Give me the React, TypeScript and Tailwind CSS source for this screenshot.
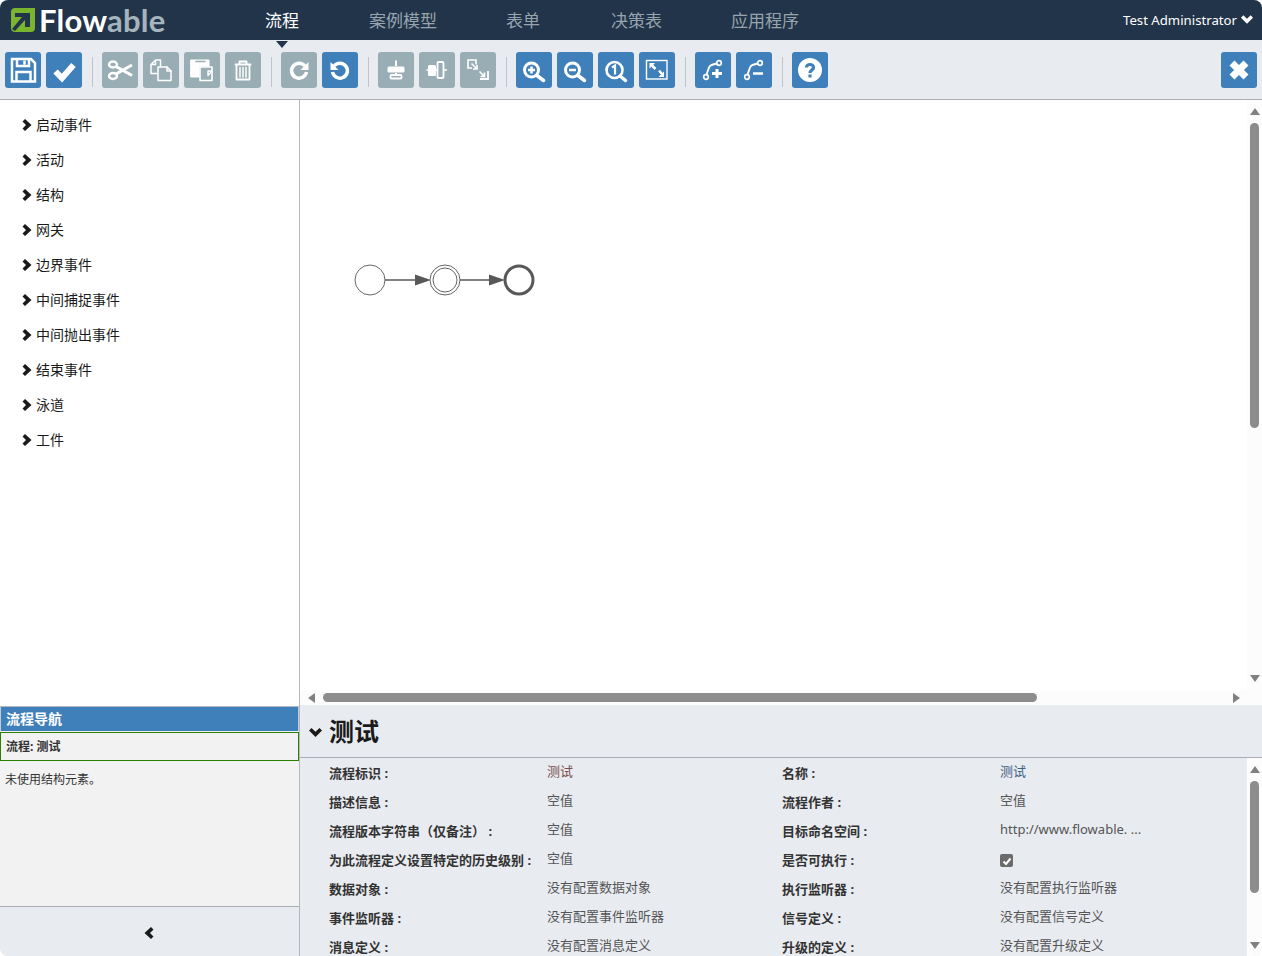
import type { ReactNode } from "react";

const FONT = "font-['Noto_Sans','Noto_Sans_CJK_SC',sans-serif]";

const NAV = [
  { label: "流程", gap: "pr-[70px] text-white" },
  { label: "案例模型", gap: "pr-[69px]" },
  { label: "表单", gap: "pr-[71px]" },
  { label: "决策表", gap: "pr-[69px]" },
  { label: "应用程序", gap: "" },
];
const PALETTE = ["启动事件", "活动", "结构", "网关", "边界事件", "中间捕捉事件", "中间抛出事件", "结束事件", "泳道", "工件"];

const ROWS: [string, string, string, string][] = [
  ["流程标识 :", "测试", "名称 :", "测试"],
  ["描述信息 :", "空值", "流程作者 :", "空值"],
  ["流程版本字符串（仅备注） :", "空值", "目标命名空间 :", "http://www.flowable. ..."],
  ["为此流程定义设置特定的历史级别 :", "空值", "是否可执行 :", "__check"],
  ["数据对象 :", "没有配置数据对象", "执行监听器 :", "没有配置执行监听器"],
  ["事件监听器 :", "没有配置事件监听器", "信号定义 :", "没有配置信号定义"],
  ["消息定义 :", "没有配置消息定义", "升级的定义 :", "没有配置升级定义"],
];

function Ico({ children }: { children: ReactNode }) {
  return (
    <svg viewBox="0 0 36 36" className="h-9 w-9" fill="none" stroke="white" strokeWidth="2" strokeLinecap="round" strokeLinejoin="round">
      {children}
    </svg>
  );
}

const ICONS: Record<string, ReactNode> = {
  save: (
    <Ico>
      <path d="M7 7H26L30 11V29.500H7Z" strokeWidth="2.500" strokeLinejoin="miter" />
      <path d="M12 7V14H24V7M19.500 8.500V12.500M11.500 29V20H25.500V29" strokeWidth="2.500" strokeLinejoin="miter" strokeLinecap="butt" />
    </Ico>
  ),
  check: (
    <Ico>
      <path d="M9.500 19.500L16 26L27.500 13" strokeWidth="6" strokeLinecap="butt" strokeLinejoin="miter" />
    </Ico>
  ),
  cut: (
    <Ico>
      <ellipse cx="11" cy="12.500" rx="4" ry="3" strokeWidth="2.400" />
      <ellipse cx="11" cy="24" rx="4" ry="3" strokeWidth="2.400" />
      <path d="M14 14.500L30 23.500M14 22L30 13" strokeWidth="3" strokeLinecap="butt" />
    </Ico>
  ),
  copy: (
    <Ico>
      <path d="M8 12.500L12.500 8H17.500V14M8 12.500H12.500V8M8 12.500V21.500H14" strokeWidth="1.500" />
      <path d="M15 15H24L28 19V28.500H15Z" strokeWidth="1.500" />
      <path d="M24 15V19H28" strokeWidth="1.500" />
    </Ico>
  ),
  paste: (
    <Ico>
      <path d="M7 8H25V14H15V25H7Z" fill="white" stroke="white" strokeWidth="1" />
      <path d="M12 9.500H21" stroke="#99aeb4" strokeWidth="1.500" />
      <path d="M16 15H28V28.500H16Z" strokeWidth="1.600" />
      <path d="M28 19L24 23.500V19Z" strokeWidth="1.400" />
    </Ico>
  ),
  trash: (
    <Ico>
      <path d="M10.500 12.500H25.500M14.500 12V9.500H21.500V12" strokeWidth="1.800" />
      <path d="M11.500 13V27.500H24.500V13" strokeWidth="1.800" />
      <path d="M15 15.500V25M18 15.500V25M21 15.500V25" strokeWidth="1.500" />
    </Ico>
  ),
  redo: (
    <Ico>
      <path d="M24 14A7.500 7.500 0 1 0 25.500 20" strokeWidth="3.500" strokeLinecap="butt" />
      <path d="M27.500 10V18H19.500Z" fill="white" stroke="none" />
    </Ico>
  ),
  undo: (
    <Ico>
      <path d="M12 14A7.500 7.500 0 1 1 10.500 20" strokeWidth="3.500" strokeLinecap="butt" />
      <path d="M8.500 10V18H16.500Z" fill="white" stroke="none" />
    </Ico>
  ),
  alignH: (
    <Ico>
      <path d="M18 8.500V14M18 21V23" strokeWidth="2" strokeLinecap="butt" />
      <rect x="9.500" y="14.500" width="17" height="6" rx="1.500" fill="white" stroke="none" />
      <rect x="12.500" y="23" width="11" height="3.500" rx="1" strokeWidth="1.800" />
    </Ico>
  ),
  alignV: (
    <Ico>
      <path d="M7.500 18H28" strokeWidth="1.500" strokeLinecap="butt" />
      <rect x="9" y="13" width="8" height="11" rx="1.500" fill="white" stroke="none" />
      <rect x="18.500" y="10" width="6" height="16" rx="1" fill="#99aeb4" stroke="white" strokeWidth="1.800" />
    </Ico>
  ),
  sameSize: (
    <Ico>
      <path d="M16 12.500V8H8V16H12" strokeWidth="1.600" strokeLinecap="butt" strokeLinejoin="miter" />
      <path d="M11.500 11.500L17 17M17 13V17H13" strokeWidth="1.600" strokeLinecap="butt" strokeLinejoin="miter" />
      <path d="M19.500 19.500L24.500 24.500M24.500 20.500V24.500H20.500" strokeWidth="1.600" strokeLinecap="butt" strokeLinejoin="miter" />
      <path d="M28 19V27H20" strokeWidth="1.800" strokeLinecap="butt" strokeLinejoin="miter" />
    </Ico>
  ),
  zoomIn: (
    <Ico>
      <circle cx="15.500" cy="18" r="7" strokeWidth="3" />
      <path d="M21 23.500L27.500 28.500" strokeWidth="3.500" />
      <path d="M12 18H19M15.500 14.500V21.500" strokeWidth="2.500" strokeLinecap="butt" />
    </Ico>
  ),
  zoomOut: (
    <Ico>
      <circle cx="15.500" cy="18" r="7" strokeWidth="3" />
      <path d="M21 23.500L27.500 28.500" strokeWidth="3.500" />
      <path d="M12 18H19" strokeWidth="2.500" strokeLinecap="butt" />
    </Ico>
  ),
  zoomOne: (
    <Ico>
      <circle cx="16.500" cy="18" r="8" strokeWidth="2.600" />
      <path d="M22 24L27.500 28.500" strokeWidth="3.500" />
      <path d="M14 15.500L17 13.500V22.500" strokeWidth="2.200" strokeLinecap="butt" strokeLinejoin="miter" />
    </Ico>
  ),
  fit: (
    <Ico>
      <rect x="7.500" y="8.500" width="20.500" height="18.500" strokeWidth="1.400" strokeLinejoin="miter" />
      <path d="M13 13.500L16.500 17M20 18.500L23 22" strokeWidth="2.500" strokeLinecap="butt" />
      <path d="M10.500 11H16L10.500 16.500Z M25 25H19.500L25 19.500Z" fill="white" stroke="none" />
    </Ico>
  ),
  bendAdd: (
    <Ico>
      <circle cx="11" cy="25" r="2.300" strokeWidth="1.700" />
      <circle cx="24" cy="11" r="2.300" strokeWidth="1.700" />
      <path d="M11.500 22.500L14 15.500C14.500 14 15 13.500 16.500 13L21.500 11.500" strokeWidth="1.900" />
      <path d="M17 21.500H27M22 17V26" strokeWidth="3" strokeLinecap="butt" />
    </Ico>
  ),
  bendRemove: (
    <Ico>
      <circle cx="11" cy="25" r="2.300" strokeWidth="1.700" />
      <circle cx="24" cy="11" r="2.300" strokeWidth="1.700" />
      <path d="M11.500 22.500L14 15.500C14.500 14 15 13.500 16.500 13L21.500 11.500" strokeWidth="1.900" />
      <path d="M17 21.500H27" strokeWidth="2.500" strokeLinecap="butt" />
    </Ico>
  ),
  help: (
    <Ico>
      <circle cx="18" cy="18" r="12" fill="white" stroke="none" />
      <path d="M14.500 15.500C14.500 11.500 21.500 11.500 21.500 15.500C21.500 18 18 18 18 21" stroke="#3f80bb" strokeWidth="3.200" strokeLinecap="butt" />
      <path d="M18 22.500V25.500" stroke="#3f80bb" strokeWidth="3.200" strokeLinecap="butt" />
    </Ico>
  ),
  close: (
    <Ico>
      <path d="M11 11L25 25M25 11L11 25" strokeWidth="7" strokeLinecap="butt" />
    </Ico>
  ),
};

function ToolButton({ icon, off }: { icon: string; off?: boolean }) {
  return (
    <div className={`h-9 w-9 rounded-[3px] ${off ? "bg-[#99aeb4]" : "bg-[#3f80bb]"}`}>{ICONS[icon]}</div>
  );
}

function Sep() {
  return <div className="mt-[5px] mr-[9px] ml-[10px] h-[30px] w-px self-start bg-[#bfc4ca]" />;
}

function Group({ children }: { children: ReactNode }) {
  return <div className="flex gap-[5px]">{children}</div>;
}

// chunky glyphicon style chevron, rotate for the other directions
function Chevron({ className }: { className: string }) {
  return (
    <svg viewBox="0 0 10 12" className={className}>
      <path d="M3 0L9.500 6L3 12L0.500 9.500L4 6L0.500 2.500Z" fill="#1a1a1a" />
    </svg>
  );
}

function ChevronBelow({ className, color }: { className: string; color: string }) {
  return (
    <svg viewBox="0 0 13 9" className={className}>
      <path d="M0 2.500L2.500 0L6.500 3.800L10.500 0L13 2.500L6.500 9Z" fill={color} />
    </svg>
  );
}

function Logo() {
  return (
    <div className="flex items-center">
      <svg viewBox="0 0 26 26" className="mr-[3px] h-[26px] w-[26px]">
        <path d="M5 1H25V21C25 23.500 23.500 25 21 25H5C2.500 25 1 23.500 1 21V5C1 2.500 2.500 1 5 1Z" fill="#7ab530" />
        <path d="M5 6H20V20H15V13L5 24L2 22L12 10H5Z" fill="#22344a" />
      </svg>
      <span className="font-['Lato',sans-serif] text-[31px] leading-none font-bold tracking-[0.2px] text-white">
        Flow<span className="text-[#a5b5bd]">able</span>
      </span>
    </div>
  );
}

function VScrollbar({ thumbClass, bottomClass }: { thumbClass: string; bottomClass: string }) {
  return (
    <div className="relative h-full w-[15px] bg-[#fcfcfc] pt-[8px]">
      <div className="ml-[3px] h-0 w-0 border-x-[5px] border-b-[7px] border-x-transparent border-b-[#808080]" />
      <div className={`absolute left-[3px] w-[9px] rounded-[5px] bg-[#8c8c8c] ${thumbClass}`} />
      <div className={`absolute left-[3px] h-0 w-0 border-x-[5px] border-t-[7px] border-x-transparent border-t-[#808080] ${bottomClass}`} />
    </div>
  );
}

function Diagram() {
  return (
    <svg className="absolute top-[160px] left-[50px]" width="190" height="40" viewBox="0 0 190 40" fill="none">
      <circle cx="20" cy="20" r="15" fill="white" stroke="#666" strokeWidth="1" />
      <path d="M35 20H66" stroke="#585858" strokeWidth="1.500" />
      <path d="M65 14.500L81 20L65 25.500Z" fill="#585858" />
      <circle cx="95" cy="20" r="15" fill="white" stroke="#666" strokeWidth="1" />
      <circle cx="95" cy="20" r="12" fill="white" stroke="#666" strokeWidth="1" />
      <path d="M110 20H140" stroke="#585858" strokeWidth="1.500" />
      <path d="M139 14.500L155 20L139 25.500Z" fill="#585858" />
      <circle cx="169" cy="20" r="14" fill="white" stroke="#585858" strokeWidth="3" />
    </svg>
  );
}

export default function App() {
  return (
    <div className={`${FONT} flex h-[956px] w-[1262px] flex-col overflow-hidden rounded-[8px] bg-white text-[#333]`}>
      {/* top bar */}
      <header className="flex h-10 shrink-0 items-center bg-[#22344a] pr-[9px] pl-[10px]">
        <div className="w-[255px]">
          <Logo />
        </div>
        <nav className="flex text-[17px] leading-none text-[#97a4ad]">
          {NAV.map((item, i) => (
            <div key={item.label} className={`relative ${item.gap}`}>
              {item.label}
              {i === 0 && (
                <div className="absolute top-[29px] left-[11px] h-0 w-0 border-x-[6px] border-t-[7px] border-x-transparent border-t-[#22344a]" />
              )}
            </div>
          ))}
        </nav>
        <div className="ml-auto flex items-center gap-1 text-[13.2px] text-white">
          <span className="pt-px">Test Administrator</span>
          <ChevronBelow className="h-[9px] w-3" color="white" />
        </div>
      </header>

      {/* toolbar */}
      <div className="flex h-[60px] shrink-0 items-start border-b border-[#a9adb5] bg-[#e8ebf0] px-[5px] pt-3">
        <Group>
          <ToolButton icon="save" />
          <ToolButton icon="check" />
        </Group>
        <Sep />
        <Group>
          <ToolButton icon="cut" off />
          <ToolButton icon="copy" off />
          <ToolButton icon="paste" off />
          <ToolButton icon="trash" off />
        </Group>
        <Sep />
        <Group>
          <ToolButton icon="redo" off />
          <ToolButton icon="undo" />
        </Group>
        <Sep />
        <Group>
          <ToolButton icon="alignH" off />
          <ToolButton icon="alignV" off />
          <ToolButton icon="sameSize" off />
        </Group>
        <Sep />
        <Group>
          <ToolButton icon="zoomIn" />
          <ToolButton icon="zoomOut" />
          <ToolButton icon="zoomOne" />
          <ToolButton icon="fit" />
        </Group>
        <Sep />
        <Group>
          <ToolButton icon="bendAdd" />
          <ToolButton icon="bendRemove" />
        </Group>
        <Sep />
        <ToolButton icon="help" />
        <div className="ml-auto">
          <ToolButton icon="close" />
        </div>
      </div>

      <div className="flex min-h-0 flex-1">
        {/* left column */}
        <aside className="flex w-[300px] shrink-0 flex-col border-r border-[#b4b8c2]">
          <ul className="h-[606px] shrink-0 bg-white pt-[7px] pl-[22px] text-[14px] text-[#1a1a1a]">
            {PALETTE.map((item) => (
              <li key={item} className="flex h-[35px] items-center gap-1">
                <Chevron className="h-3 w-[10px]" />
                {item}
              </li>
            ))}
          </ul>
          <div className="flex min-h-0 flex-1 flex-col border-t border-[#b4b8c2] bg-[#f2f2f2]">
            <div className="flex h-[24px] shrink-0 items-center border-x border-[#c5c9d0] bg-[#3f80bb] px-[5px] pb-[2px] text-[14px] font-bold text-white">流程导航</div>
            <div className="mt-px flex h-[29px] shrink-0 items-center border border-[#2a8000] px-[5px] text-[12px] font-bold text-[#333]">
              流程: 测试
            </div>
            <div className="px-[5px] pt-[10px] text-[12px] text-[#333]">未使用结构元素。</div>
            <div className="mt-auto flex h-[50px] shrink-0 items-center justify-center border-t border-[#a9adb5] bg-[#e8ebf0] pt-[2px] pr-[2px]">
              <Chevron className="h-3 w-[10px] rotate-180" />
            </div>
          </div>
        </aside>

        {/* right column */}
        <main className="flex min-w-0 flex-1 flex-col">
          <div className="relative h-[605px] shrink-0 bg-white">
            <Diagram />
            <div className="absolute top-0 right-0 h-[590px]">
              <VScrollbar thumbClass="top-[23px] h-[305px]" bottomClass="bottom-[8px]" />
            </div>
            <div className="absolute right-0 bottom-0 left-0 flex h-[15px] items-center bg-[#fcfcfc] pr-[22px] pl-[8px]">
              <div className="h-0 w-0 border-y-[5px] border-r-[7px] border-y-transparent border-r-[#808080]" />
              <div className="ml-[8px] h-[9px] w-[714px] rounded-[5px] bg-[#8c8c8c]" />
              <div className="ml-auto h-0 w-0 border-y-[5px] border-l-[7px] border-y-transparent border-l-[#808080]" />
            </div>
          </div>
          <div className="flex min-h-0 flex-1 flex-col bg-[#e8ebf0]">
            <div className="flex h-[53px] shrink-0 items-center gap-[7px] border-b border-[#a9adb5] pt-[2px] pl-[9px]">
              <ChevronBelow className="h-[9px] w-[13px]" color="#1a1a1a" />
              <h2 className="text-[25px] font-bold text-[#1a1a1a]">测试</h2>
            </div>
            <div className="relative min-h-0 flex-1 overflow-hidden pr-[15px]">
              <div className="pt-[2px] pl-[29px]">
                {ROWS.map(([a, b, c, d]) => (
                  <div key={a} className="grid h-[29px] grid-cols-[218px_235px_218px_1fr] items-center text-[13px]">
                    <div className="-mt-[2px] font-bold text-[#333]">{a}</div>
                    <div className={`-mt-[5px] ${b === "测试" ? "text-[#7a4f4f]" : "text-[#555]"}`}>{b}</div>
                    <div className="-mt-[2px] font-bold text-[#333]">{c}</div>
                    {d === "__check" ? (
                      <div className="-mt-[2px] flex h-[13px] w-[13px] items-center justify-center rounded-[2px] bg-[#6b6b6b]">
                        <svg viewBox="0 0 12 12" className="h-3 w-3" fill="none" stroke="white" strokeWidth="2">
                          <path d="M2.500 6.500L5 9L9.500 3.500" />
                        </svg>
                      </div>
                    ) : (
                      <div className={`-mt-[5px] ${d === "测试" ? "text-[#3f5f85]" : "text-[#555]"}`}>{d}</div>
                    )}
                  </div>
                ))}
              </div>
              <div className="absolute top-0 right-0 h-full">
                <VScrollbar thumbClass="top-[23px] h-[112px]" bottomClass="bottom-[7px]" />
              </div>
            </div>
          </div>
        </main>
      </div>
    </div>
  );
}
